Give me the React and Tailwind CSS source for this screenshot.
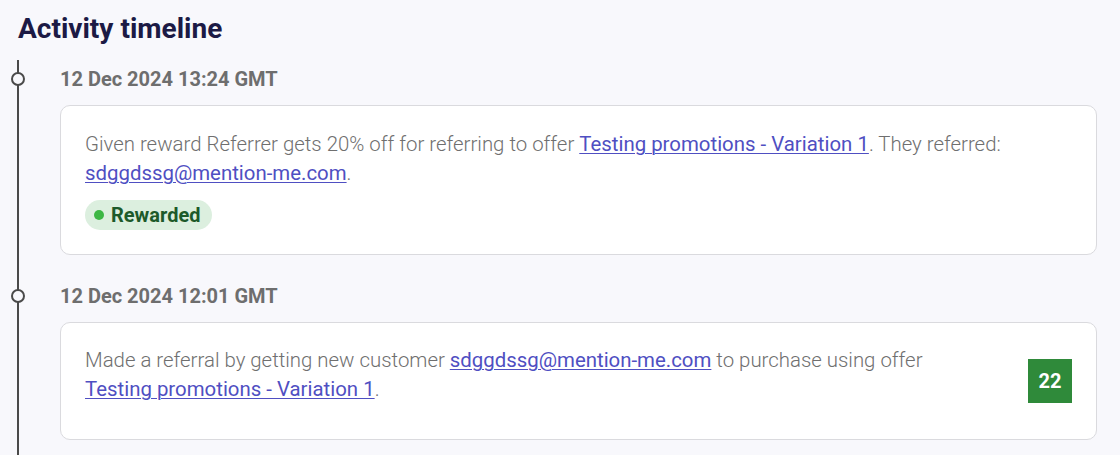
import React from 'react';

const font = { fontFamily: 'Roboto, "Liberation Sans", sans-serif' };

const Link = ({ children }) => (
    <a href="#" className="text-[#4f4fc2] font-normal underline underline-offset-2 decoration-1 whitespace-nowrap">
        {children}
    </a>
);

const TimelineItem = ({ date, children, className = '' }) => (
    <div className={`relative pl-[41px] ${className}`}>
        <span className="absolute left-[-8px] top-[5px] w-[14px] h-[14px] rounded-full border-2 border-[#4a4a4a] bg-[#f8f8fc]" />
        <div className="text-[20px] leading-[24px] font-bold text-[#6e6e6e]">{date}</div>
        <div className="mt-[14px] mr-[23px] bg-white border border-[#dadade] rounded-[10px]">
            {children}
        </div>
    </div>
);

export default function App() {
    return (
        <div className="w-full h-[455px] overflow-hidden bg-[#f8f8fc] flex flex-col" style={font}>
            <h2 className="pl-[18px] pt-[13px] text-[28px] leading-[32px] font-bold text-[#1c1a45]">
                Activity timeline
            </h2>
            <div className="mt-[15px] ml-[17px] flex-1 border-l-2 border-[#4a4a4a] pt-[7px]">
                <TimelineItem date="12 Dec 2024 13:24 GMT">
                    <div className="pl-6 pr-6 pt-[24px] pb-[24px] text-[20.4px] leading-[29px] font-light text-[#6f6f6f]">
                        <p>
                            Given reward Referrer gets 20% off for referring to offer{' '}
                            <Link>Testing promotions - Variation 1</Link>. They referred:{' '}
                            <Link>sdggdssg@mention-me.com</Link>.
                        </p>
                        <span className="mt-3 inline-flex items-center gap-[7px] h-[30px] pl-[9px] pr-[12px] rounded-full bg-[#dcefdf] text-[#1d5a2a] font-bold text-[20px] leading-none">
                            <span className="w-[10px] h-[10px] rounded-full bg-[#3cb744]" />
                            Rewarded
                        </span>
                    </div>
                </TimelineItem>
                <TimelineItem date="12 Dec 2024 12:01 GMT" className="mt-[29px]">
                    <div className="flex items-center gap-6 pl-6 pr-6 pt-[23px] pb-[35px]">
                        <p className="flex-1 text-[20.4px] leading-[29px] font-light text-[#6f6f6f]">
                            Made a referral by getting new customer{' '}
                            <Link>sdggdssg@mention-me.com</Link> to purchase using offer{' '}
                            <Link>Testing promotions - Variation 1</Link>.
                        </p>
                        <div className="mt-[12px] w-[44px] h-[44px] flex items-center justify-center bg-[#2f8a3a] text-white font-bold text-[20px]">
                            22
                        </div>
                    </div>
                </TimelineItem>
            </div>
        </div>
    );
}
